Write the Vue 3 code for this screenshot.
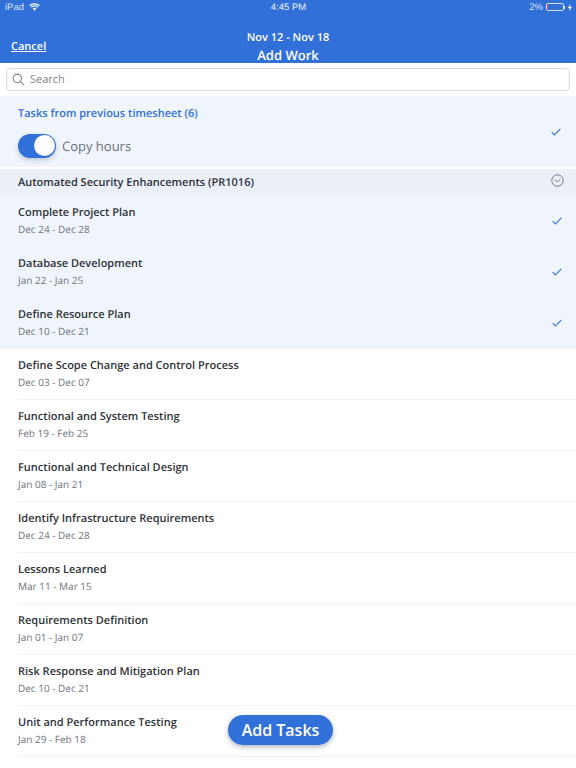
<template>
  <div class="screen">
    <header class="top">
      <div class="status">
        <div class="status-left">
          <span>iPad</span>
          <svg width="11" height="8" viewBox="0 0 11 8" class="wifi">
            <path d="M0.6 2.8C3.3 0.3 7.7 0.3 10.4 2.8" />
            <path d="M2.3 4.4C4.1 2.8 6.9 2.8 8.7 4.4" />
            <path d="M4 6C4.8 5.3 6.2 5.3 7 6" />
            <circle cx="5.5" cy="7" r="0.8" />
          </svg>
        </div>
        <div class="status-time">4:45 PM</div>
        <div class="status-right">
          <span>2%</span>
          <div class="battery"><div class="battery-level"></div></div>
          <div class="battery-tip"></div>
          <svg width="4" height="7" viewBox="0 0 4 7" class="bolt">
            <polygon points="2.4,0 0,3.9 1.6,3.9 1.2,7 4,2.9 2.3,2.9" />
          </svg>
        </div>
      </div>
      <div class="nav">
        <a class="cancel">Cancel</a>
        <div class="nav-titles">
          <div class="range">Nov 12 - Nov 18</div>
          <div class="title">Add Work</div>
        </div>
      </div>
    </header>

    <div class="search-wrap">
      <div class="search">
        <svg width="13" height="13" viewBox="0 0 13 13" class="search-icon">
          <circle cx="5.3" cy="5.3" r="4.2" />
          <path d="M8.4 8.4L12.2 12.2" />
        </svg>
        <span>Search</span>
      </div>
    </div>

    <section class="previous">
      <div>
        <div class="previous-title">Tasks from previous timesheet (6)</div>
        <div class="copy-row">
          <div class="toggle"><div class="knob"></div></div>
          <span class="copy-label">Copy hours</span>
        </div>
      </div>
      <svg width="10" height="8" viewBox="0 0 10 8" class="check check-top">
        <path d="M0.7 4.2L3.4 7L9.4 0.8" />
      </svg>
    </section>

    <div class="group">
      <span>Automated Security Enhancements (PR1016)</span>
      <svg width="13" height="13" viewBox="0 0 13 13" class="chevron">
        <circle cx="6.5" cy="6.5" r="5.7" />
        <path d="M3.8 5.4L6.5 8.1L9.2 5.4" />
      </svg>
    </div>

    <ul class="tasks">
      <li
        v-for="task in tasks"
        :key="task.name"
        class="task"
        :class="{ 'task--selected': task.selected }"
      >
        <div>
          <div class="task-name">{{ task.name }}</div>
          <div class="task-date">{{ task.date }}</div>
        </div>
        <svg v-if="task.selected" width="10" height="8" viewBox="0 0 10 8" class="check">
          <path d="M0.7 4.2L3.4 7L9.4 0.8" />
        </svg>
      </li>
    </ul>

    <button class="add-btn">Add Tasks</button>
  </div>
</template>

<script setup>
const tasks = [
  { name: 'Complete Project Plan', date: 'Dec 24 - Dec 28', selected: true },
  { name: 'Database Development', date: 'Jan 22 - Jan 25', selected: true },
  { name: 'Define Resource Plan', date: 'Dec 10 - Dec 21', selected: true },
  { name: 'Define Scope Change and Control Process', date: 'Dec 03 - Dec 07' },
  { name: 'Functional and System Testing', date: 'Feb 19 - Feb 25' },
  { name: 'Functional and Technical Design', date: 'Jan 08 - Jan 21' },
  { name: 'Identify Infrastructure Requirements', date: 'Dec 24 - Dec 28' },
  { name: 'Lessons Learned', date: 'Mar 11 - Mar 15' },
  { name: 'Requirements Definition', date: 'Jan 01 - Jan 07' },
  { name: 'Risk Response and Mitigation Plan', date: 'Dec 10 - Dec 21' },
  { name: 'Unit and Performance Testing', date: 'Jan 29 - Feb 18' }
]
</script>

<style>
html,
body {
  margin: 0;
  background: #fff;
}
</style>

<style scoped>
.screen {
  position: relative;
  width: 576px;
  height: 768px;
  overflow: hidden;
  background: #fff;
  font-family: "Open Sans", "Noto Sans", sans-serif;
  color: #2f3237;
  text-rendering: geometricPrecision;
}

.top {
  height: 63px;
  background: #3170d8;
  color: #fff;
  box-sizing: border-box;
}

.status {
  display: grid;
  grid-template-columns: 1fr auto 1fr;
  align-items: center;
  height: 14px;
  padding: 0 4px 0 5px;
  font-size: 9.5px;
  font-family: "Liberation Sans", sans-serif;
}

.status-left {
  display: flex;
  align-items: center;
  gap: 5px;
  color: #d5e2f7;
}

.status-time {
  color: #eef3fc;
}

.status-right {
  display: flex;
  align-items: center;
  justify-content: flex-end;
  color: #d5e2f7;
}

.wifi path {
  fill: none;
  stroke: #fff;
  stroke-width: 1.2;
}

.wifi circle,
.bolt polygon {
  fill: #fff;
}

.battery {
  width: 16px;
  height: 6px;
  margin-left: 3px;
  border: 1px solid #d5e2f7;
  border-radius: 2px;
}

.battery-level {
  width: 1px;
  height: 100%;
  background: #e0455a;
}

.battery-tip {
  width: 1px;
  height: 3px;
  margin-right: 3px;
  background: #d5e2f7;
}

.nav {
  position: relative;
  display: flex;
  justify-content: center;
  height: 49px;
}

.cancel {
  position: absolute;
  left: 11px;
  top: 24px;
  font-size: 11px;
  font-weight: 600;
  text-decoration: underline;
  line-height: 17px;
}

.nav-titles {
  padding-top: 15px;
  text-align: center;
  font-weight: 600;
}

.range {
  font-size: 11px;
  line-height: 17px;
}

.title {
  font-size: 13px;
  line-height: 19px;
}

.search-wrap {
  height: 33px;
  box-sizing: border-box;
  padding: 5px 6px 0;
  background: #fff;
}

.search {
  display: flex;
  align-items: center;
  gap: 5px;
  height: 23px;
  box-sizing: border-box;
  padding-left: 5px;
  background: #fff;
  border: 1px solid #d5dae8;
  border-radius: 4px;
  font-size: 11px;
  color: #7f838b;
}

.search-icon circle,
.search-icon path {
  fill: none;
  stroke: #7f838b;
  stroke-width: 1.1;
}

.previous {
  display: flex;
  justify-content: space-between;
  align-items: center;
  height: 73px;
  box-sizing: border-box;
  padding: 0 15px 0 18px;
  background: #f0f5fc;
  border-bottom: 2px solid #fff;
}

.previous-title {
  font-size: 11px;
  font-weight: 600;
  line-height: 16px;
  color: #3170d8;
}

.copy-row {
  display: flex;
  align-items: center;
  gap: 6px;
  margin-top: 12px;
}

.toggle {
  display: flex;
  align-items: center;
  justify-content: flex-end;
  width: 38px;
  height: 24px;
  box-sizing: border-box;
  padding-right: 1px;
  border-radius: 12px;
  background: #3170d8;
  box-shadow: 0 2px 5px rgba(40, 60, 100, 0.25);
}

.knob {
  width: 21px;
  height: 21px;
  border-radius: 50%;
  background: #fff;
}

.copy-label {
  font-size: 13px;
  color: #6c7078;
}

.check path {
  fill: none;
  stroke: #3f78d8;
  stroke-width: 1.2;
}

.group {
  display: flex;
  justify-content: space-between;
  align-items: center;
  height: 27px;
  box-sizing: border-box;
  padding: 0 12px 0 18px;
  background: #ebeff7;
  font-size: 11px;
  font-weight: 600;
}

.chevron {
  margin-top: -4px;
}

.chevron circle,
.chevron path {
  fill: none;
  stroke: #74777f;
  stroke-width: 1;
}

.tasks {
  margin: 0;
  padding: 0;
  list-style: none;
}

.task {
  display: flex;
  justify-content: space-between;
  align-items: center;
  height: 51px;
  box-sizing: border-box;
  margin-left: 18px;
  padding-right: 14px;
  border-bottom: 1px solid #eff2f7;
}

.task--selected {
  margin-left: 0;
  padding-left: 18px;
  background: #f0f5fc;
  border-bottom-color: #f0f5fc;
}

.task-name {
  font-size: 11px;
  font-weight: 600;
  line-height: 16px;
}

.task-date {
  margin-top: 1px;
  font-size: 10px;
  line-height: 15px;
  color: #71757c;
}

.add-btn {
  position: absolute;
  left: 228px;
  top: 715px;
  width: 105px;
  height: 30px;
  padding: 0;
  border: 0;
  border-radius: 15px;
  background: #3170d8;
  box-shadow: 0 2px 5px rgba(30, 40, 70, 0.35);
  color: #fff;
  font-family: inherit;
  font-size: 16px;
  font-weight: 600;
}
</style>
